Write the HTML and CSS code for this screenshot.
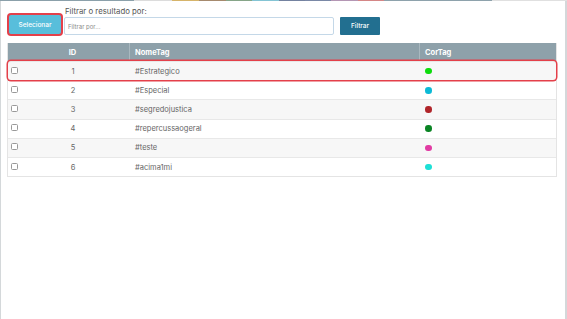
FILE: index.html
```html
<!DOCTYPE html>
<html lang="pt">
<head>
  <meta charset="UTF-8">
  <meta name="viewport" content="width=device-width, initial-scale=1.0">
  <title>Tags</title>
  <link rel="stylesheet" href="styles.css">
</head>
<body>
  <div class="backdrop-strip">
    <span class="strip-a"></span>
    <span class="strip-b"></span>
    <span class="strip-c"></span>
    <span class="strip-d"></span>
    <span class="strip-e"></span>
    <span class="strip-f"></span>
    <span class="strip-g"></span>
    <span class="strip-h"></span>
    <span class="strip-i"></span>
    <span class="strip-j"></span>
    <span class="strip-k"></span>
    <span class="strip-l"></span>
  </div>
  <div class="modal">
    <div class="toolbar">
      <button class="btn-select" type="button">Selecionar</button>
      <div class="filter-field">
        <label class="filter-label" for="filter-input">Filtrar o resultado por:</label>
        <input id="filter-input" class="filter-input" type="text" placeholder="Filtrar por...">
      </div>
      <button class="btn-filter" type="button">Filtrar</button>
    </div>

    <div class="tag-table">
      <div class="tag-row tag-head">
        <div class="cell cell-check"></div>
        <div class="cell cell-id">ID</div>
        <div class="cell cell-name">NomeTag</div>
        <div class="cell cell-color">CorTag</div>
      </div>
      <div class="tag-row selected">
        <div class="cell cell-check"><input class="row-check" type="checkbox"></div>
        <div class="cell cell-id">1</div>
        <div class="cell cell-name">#Estrategico</div>
        <div class="cell cell-color"><span class="dot dot-green"></span></div>
      </div>
      <div class="tag-row">
        <div class="cell cell-check"><input class="row-check" type="checkbox"></div>
        <div class="cell cell-id">2</div>
        <div class="cell cell-name">#Especial</div>
        <div class="cell cell-color"><span class="dot dot-cyan"></span></div>
      </div>
      <div class="tag-row">
        <div class="cell cell-check"><input class="row-check" type="checkbox"></div>
        <div class="cell cell-id">3</div>
        <div class="cell cell-name">#segredojustica</div>
        <div class="cell cell-color"><span class="dot dot-red"></span></div>
      </div>
      <div class="tag-row">
        <div class="cell cell-check"><input class="row-check" type="checkbox"></div>
        <div class="cell cell-id">4</div>
        <div class="cell cell-name">#repercussaogeral</div>
        <div class="cell cell-color"><span class="dot dot-forest"></span></div>
      </div>
      <div class="tag-row">
        <div class="cell cell-check"><input class="row-check" type="checkbox"></div>
        <div class="cell cell-id">5</div>
        <div class="cell cell-name">#teste</div>
        <div class="cell cell-color"><span class="dot dot-pink"></span></div>
      </div>
      <div class="tag-row">
        <div class="cell cell-check"><input class="row-check" type="checkbox"></div>
        <div class="cell cell-id">6</div>
        <div class="cell cell-name">#acima1mi</div>
        <div class="cell cell-color"><span class="dot dot-turquoise"></span></div>
      </div>
    </div>
  </div>
</body>
</html>
```

FILE: styles.css
```css
*{
  margin: 0;
  padding: 0;
  box-sizing: border-box;
}
body{
  width: 567px;
  height: 319px;
  overflow: hidden;
  background: #d4d8da;
  font-family: Inter, "Noto Sans", sans-serif;
  color: #666;
}
.backdrop-strip{
  display: flex;
  height: 1px;
}
.backdrop-strip span{
  display: block;
  height: 1px;
}
.strip-a{ width: 134px; background: #8ba0aa; }
.strip-b{ width: 38px; background: #dcdcdc; }
.strip-c{ width: 27px; background: #d6b46a; }
.strip-d{ width: 27px; background: #a68a6e; }
.strip-e{ width: 26px; background: #86a588; }
.strip-f{ width: 27px; background: #84c4d4; }
.strip-g{ width: 26px; background: #7482a0; }
.strip-h{ width: 26px; background: #7a88a6; }
.strip-i{ width: 27px; background: #b496b4; }
.strip-j{ width: 26px; background: #d48686; }
.strip-k{ width: 108px; background: #8ea2ac; }
.strip-l{ flex: 1; background: #e0e0e0; }

.modal{
  height: 318px;
  margin: 0 2px 0 1px;
  padding: 6px 8px 0 6px;
  background: #fff;
}
.toolbar{
  display: flex;
  align-items: flex-end;
  height: 28px;
}
.btn-select{
  width: 52px;
  height: 19px;
  margin: 0 3px 1px 2px;
  border: none;
  border-radius: 2px;
  background: #58bedb;
  box-shadow: 0 0 0 2px #e4404a;
  color: #fff;
  font: 500 6.5px Inter, "Noto Sans", sans-serif;
  cursor: pointer;
}
.filter-field{
  display: flex;
  flex-direction: column;
}
.filter-label{
  padding-left: 1px;
  height: 10px;
  font-size: 7.8px;
  line-height: 9px;
  color: #555;
}
.filter-input{
  width: 270px;
  height: 18px;
  padding: 0 3px;
  border: 1px solid #c4d8e8;
  border-radius: 2px;
  outline: none;
  font: 6px Inter, "Noto Sans", sans-serif;
  color: #555;
}
.filter-input::placeholder{
  color: #8a8a8a;
}
.btn-filter{
  width: 40px;
  height: 18px;
  margin-left: 6px;
  border: none;
  border-radius: 1px;
  background: #226f90;
  color: #fff;
  font: 500 6.5px Inter, "Noto Sans", sans-serif;
  cursor: pointer;
}

.tag-table{
  margin-top: 8px;
  border: 1px solid #e4e4e4;
  border-top: none;
}
.tag-row{
  display: grid;
  grid-template-columns: 12px 110px 290px 1fr;
  height: 19.2px;
  border-top: 1px solid #e8e8e8;
  font-size: 7.5px;
}
.tag-row:nth-child(even){
  background: #f7f7f7;
}
.tag-row.selected{
  border-radius: 3px;
  box-shadow: 0 0 0 1.5px #e4404a;
  position: relative;
}
.tag-head{
  height: 18px;
  border-top: none;
  background: #8ea1aa;
  color: #fff;
  font-weight: 700;
}
.tag-head .cell{
  border-right: 1px solid #a9b8bf;
}
.tag-head .cell:last-child,
.tag-head .cell-check{
  border-right: none;
}
.cell{
  display: flex;
  align-items: center;
  padding-left: 5px;
}
.cell-check{
  padding-left: 3px;
}
.cell-id{
  justify-content: center;
  padding: 0 4px 0 0;
}
.row-check{
  appearance: none;
  width: 7px;
  height: 7px;
  margin-top: -2px;
  border: 1px solid #999;
  border-radius: 1.5px;
  background: #fff;
}
.dot{
  display: block;
  width: 6.5px;
  height: 6.5px;
  border-radius: 50%;
}
.dot-green{ background: #0ddc0d; }
.dot-cyan{ background: #0cbad6; }
.dot-red{ background: #b0252a; }
.dot-forest{ background: #0a8424; }
.dot-pink{ background: #e13ba3; }
.dot-turquoise{ background: #1de0d6; }
```
